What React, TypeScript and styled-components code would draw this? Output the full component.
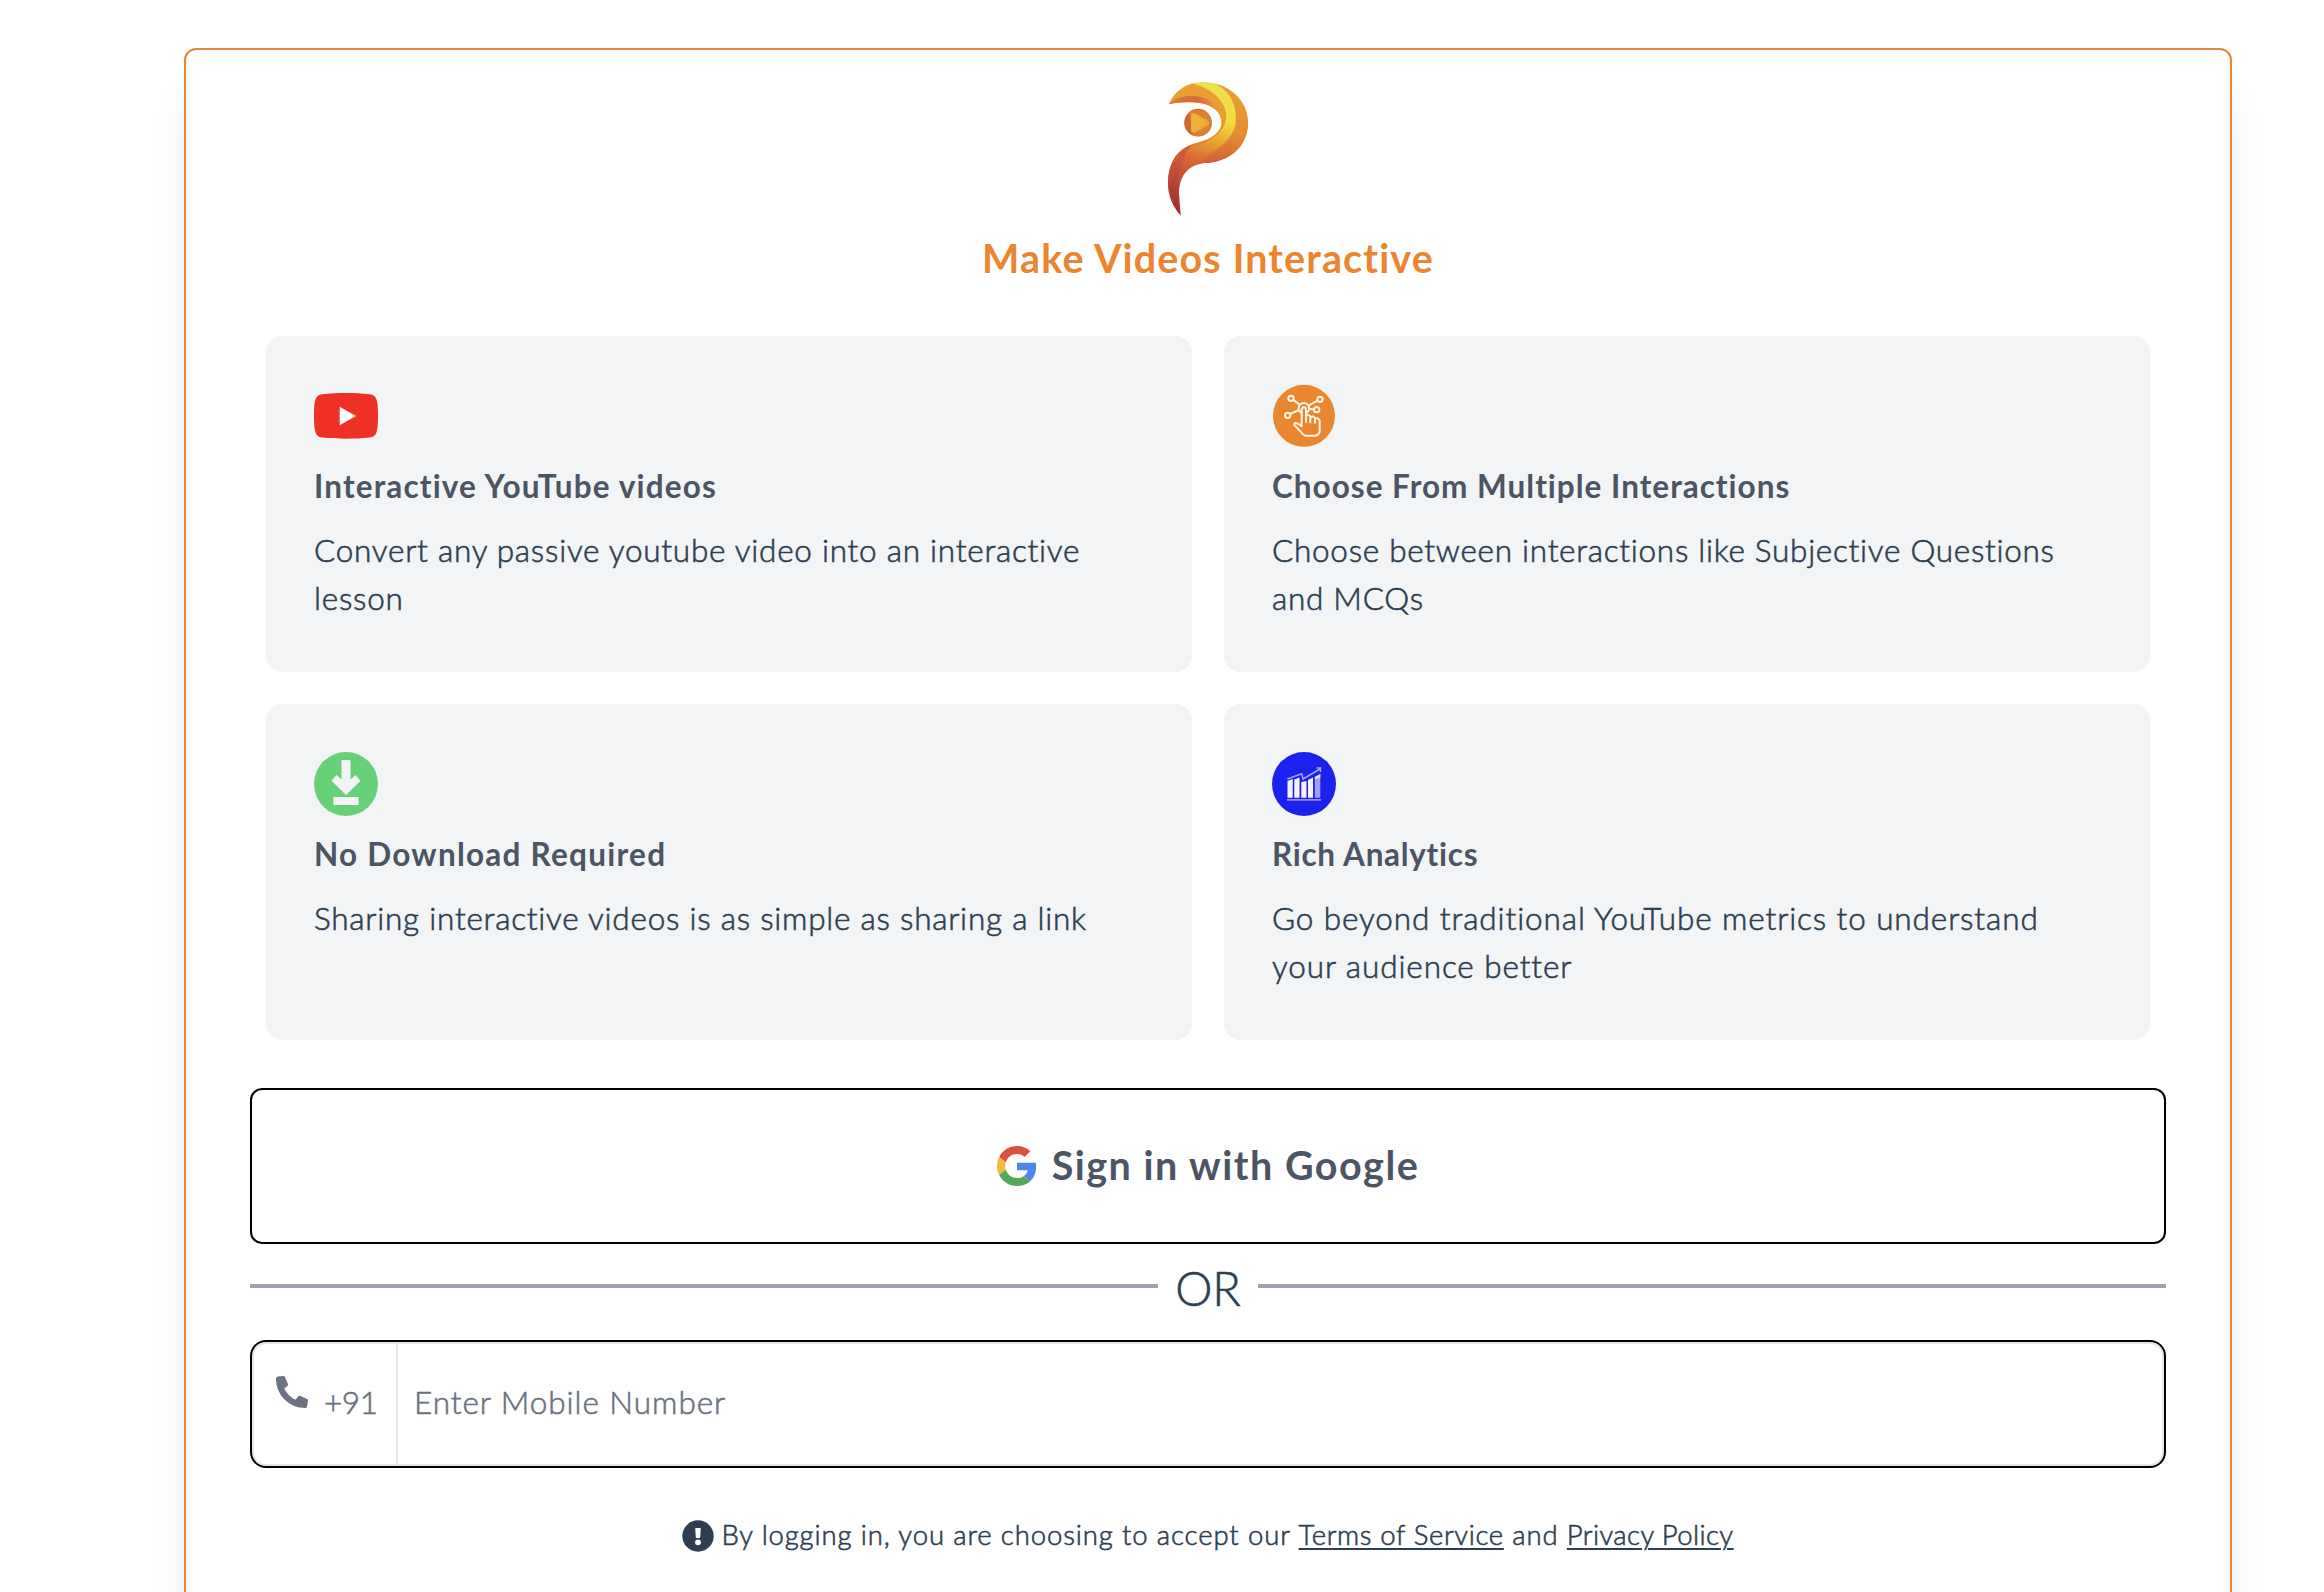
import React from "react";
import styled, { createGlobalStyle } from "styled-components";

const GlobalStyle = createGlobalStyle`
  *, *::before, *::after { box-sizing: border-box; }
  html, body { margin: 0; padding: 0; background: #fff; overflow: hidden; }
  body {
    font-family: Lato, "Liberation Sans", sans-serif;
    font-weight: 300;
    color: #2c3e50;
    font-variant-ligatures: none;
    -webkit-text-stroke: 0.6px currentColor;
  }
  h1, h2, p { margin: 0; }
  h1, h2, button { -webkit-text-stroke: 0; }
`;

const Page = styled.main`
  display: flex;
  height: 1592px;
  padding: 48px 92px 0 184px;
  overflow: hidden;
`;

const Panel = styled.section`
  display: flex;
  flex-direction: column;
  flex: 1;
  height: 1660px;
  padding: 32px 64px 0;
  border: 2px solid #ea8530;
  border-radius: 12px;
  background: #fff;
  box-shadow: 0 40px 50px -10px rgba(0, 0, 0, 0.1), 0 20px 20px -10px rgba(0, 0, 0, 0.04);
`;

const Brand = styled.header`
  display: flex;
  flex-direction: column;
  align-items: center;
  height: 254px;
`;

const BrandMark = styled.svg`
  width: 80px;
  height: 134px;
`;

const Heading = styled.h1`
  margin-top: 14px;
  color: #ea8530;
  font-size: 39.5px;
  font-weight: 700;
  line-height: 56px;
  letter-spacing: 1.15px;
`;

const FeatureGrid = styled.div`
  display: grid;
  grid-template-columns: repeat(2, 926px);
  grid-auto-rows: 336px;
  gap: 32px;
  padding: 0 16px;
`;

const FeatureCard = styled.article`
  padding: 48px 48px 0;
  border-radius: 16px;
  background: #f3f4f6;
`;

const FeatureIcon = styled.svg`
  display: block;
  width: 64px;
  height: 64px;
`;

const FeatureTitle = styled.h2<{ $tracking: number }>`
  margin-top: 14px;
  color: #4b5563;
  font-size: 31.5px;
  font-weight: 700;
  line-height: 48px;
  letter-spacing: ${(p) => p.$tracking}px;
`;

const FeatureText = styled.p<{ $tracking: number }>`
  margin-top: 16px;
  font-size: 31.5px;
  line-height: 48px;
  letter-spacing: ${(p) => p.$tracking}px;
`;

const GoogleButton = styled.button`
  display: flex;
  align-items: center;
  justify-content: center;
  gap: 15px;
  height: 156px;
  margin-top: 48px;
  padding: 0;
  border: 2px solid #000;
  border-radius: 12px;
  background: #fff;
  color: #4b5563;
  font: 700 39.5px/56px Lato, "Liberation Sans", sans-serif;
  letter-spacing: 1.5px;
`;

const GoogleMark = styled.svg`
  width: 40px;
  height: 40px;
`;

const GoogleLabel = styled.span`
  padding-bottom: 3px;
`;

const Divider = styled.div`
  display: flex;
  align-items: flex-start;
  height: 96px;
  padding-top: 8px;
`;

const Rule = styled.span`
  flex: 1;
  height: 4px;
  margin-top: 32px;
  background: #9ca3af;
`;

const DividerLabel = styled.span`
  width: 100px;
  font-size: 47px;
  line-height: 72px;
  text-align: center;
`;

const PhoneField = styled.div`
  display: flex;
  height: 128px;
  border: 2px solid #000;
  border-radius: 16px;
  background: #fff;
  box-shadow: inset 0 0 0 2px #e5e7eb;
  color: #6b7280;
  font-size: 31.5px;
  line-height: 48px;
`;

const DialCode = styled.div`
  display: flex;
  gap: 16px;
  width: 144px;
  margin-left: 2px;
  padding: 34px 0 0 22px;
  border-right: 2px solid #e5e7eb;
  letter-spacing: -0.4px;
`;

const CodeText = styled.span`
  padding-top: 2px;
`;

const PhoneGlyph = styled.svg`
  width: 32px;
  height: 32px;
  flex: none;
`;

const Placeholder = styled.span`
  padding: 36px 0 0 16px;
  letter-spacing: 0.95px;
`;

const Legal = styled.footer`
  display: flex;
  align-items: center;
  justify-content: center;
  gap: 7px;
  margin-top: 46px;
  font-size: 27.5px;
  line-height: 42px;
  letter-spacing: 0.88px;
`;

const AlertGlyph = styled.svg`
  width: 32px;
  height: 32px;
  margin-top: 2px;
`;

const LegalLink = styled.a<{ $tracking: number }>`
  color: inherit;
  letter-spacing: ${(p) => p.$tracking}px;
  text-decoration: underline;
  text-decoration-thickness: 1.5px;
  text-underline-offset: 3px;
`;

function PlayBrand() {
  return (
    <BrandMark viewBox="84 64 240 402" role="img" aria-label="Logo">
      <defs>
        <linearGradient id="body" gradientUnits="userSpaceOnUse" x1="210" y1="66" x2="110" y2="465">
          <stop offset="0" stopColor="#e9a233" />
          <stop offset=".3" stopColor="#ea9a2e" />
          <stop offset=".5" stopColor="#e27a35" />
          <stop offset=".66" stopColor="#cd5638" />
          <stop offset=".85" stopColor="#b53c35" />
          <stop offset="1" stopColor="#9c2b30" />
        </linearGradient>
        <linearGradient id="outer" gradientUnits="userSpaceOnUse" x1="280" y1="80" x2="225" y2="308">
          <stop offset="0" stopColor="#e8a031" />
          <stop offset=".55" stopColor="#e58e30" />
          <stop offset="1" stopColor="#d0603a" />
        </linearGradient>
        <linearGradient id="band" gradientUnits="userSpaceOnUse" x1="260" y1="80" x2="170" y2="300">
          <stop offset="0" stopColor="#efe04e" />
          <stop offset=".4" stopColor="#f2dc43" />
          <stop offset=".68" stopColor="#eba52f" />
          <stop offset="1" stopColor="#d9683a" />
        </linearGradient>
        <linearGradient id="fold" gradientUnits="userSpaceOnUse" x1="90" y1="110" x2="250" y2="150">
          <stop offset="0" stopColor="#dd7935" />
          <stop offset=".5" stopColor="#d8693a" />
          <stop offset="1" stopColor="#e6ad3b" />
        </linearGradient>
        <linearGradient id="tail" gradientUnits="userSpaceOnUse" x1="150" y1="260" x2="100" y2="450">
          <stop offset="0" stopColor="#d15c3a" />
          <stop offset="1" stopColor="#972a30" />
        </linearGradient>
        <clipPath id="shape">
          <path d="M86 131C104 92 137 65 188 65C264 65 324 118 324 187C324 256 270 304 195 307C146 310 112 348 118 410C119 430 121 447 122 465C97 436 84 405 84 367C84 313 106 277 137 260C167 244 196 244 222 224C236 212 244 202 244 183C244 150 207 126 158 125C130 124 105 126 86 131Z" />
        </clipPath>
      </defs>
      <g clipPath="url(#shape)">
        <rect x="84" y="64" width="240" height="402" fill="url(#body)" />
        <path d="M210 60C265 78 292 124 287 185C280 247 210 287 148 325L250 320L335 240L330 60Z" fill="url(#outer)" />
        <path d="M150 66C178 64 198 65 221 68C268 88 293 133 287 188C279 239 230 268 147 307L150 262C218 242 257 211 259 168C260 120 211 80 150 66Z" fill="url(#band)" />
        <path d="M86 131C113 105 153 101 190 111C225 122 244 149 244 183L234 158C209 128 155 119 86 131Z" fill="url(#fold)" />
        <path d="M165 248C128 272 116 323 84 395L84 250Z" fill="#d2573b" opacity=".65" />
        <path d="M150 255C112 281 88 313 82 370L122 468C96 400 112 330 150 255Z" fill="url(#tail)" opacity=".6" />
      </g>
      <circle cx="174" cy="186" r="41.500" fill="#d3673a" />
      <path d="M147 155C174 138 211 151 215 183C218 213 190 232 161 225Z" fill="#dd7e37" />
      <path d="M153 163Q153 153 163 156L201 177Q213 184 204 195L164 216Q153 219 153 208Z" fill="#eaa638" />
      <path d="M154 165Q155 156 164 160L191 177Q199 183 191 193L162 212Q154 213 154 204Z" fill="#ecb33a" />
    </BrandMark>
  );
}

function YouTubeIcon() {
  return (
    <FeatureIcon viewBox="192 192 192 192">
      <path
        d="M192 288C192 266 193 250 196 240C199 229 205 224 217 222.500C240 220 264 219 288 219C312 219 336 220 359 222.500C371 224 377 229 380 240C383 250 384 266 384 288C384 309 383 325 380 335C377 346 371 351 359 352.500C336 355 312 356 288 356C264 356 240 355 217 352.500C205 351 199 346 196 335C193 325 192 309 192 288Z"
        fill="#ee3124"
      />
      <path d="M269 260L318 288L269 316Z" fill="#fff" />
    </FeatureIcon>
  );
}

function InteractionIcon() {
  return (
    <FeatureIcon viewBox="36 42 192 192">
      <circle cx="132" cy="137.500" r="93" fill="#ea8530" />
      <g fill="none" stroke="#fff3e2" strokeWidth="6" strokeLinecap="round" strokeLinejoin="round">
        <circle cx="93" cy="85" r="8" />
        <circle cx="180" cy="88" r="8" />
        <circle cx="170" cy="119" r="8" />
        <circle cx="83" cy="136" r="8" />
        <path d="M100 90L119 104M173 92L145 107M162 118L147 117M90 132L117 120" />
        <path d="M121 127A16 16 0 1 1 142 127" />
        <path d="M125 166V120Q125 112 131.500 112Q138 112 138 120V156M138 137Q145 132 151 140V157M151 142Q159 136 165 144V158M165 148Q174 141 179 151V181Q179 195 166 197H136Q128 194 123 186L104 166Q101 158 109 159Q114 160 125 169" />
      </g>
    </FeatureIcon>
  );
}

function DownloadIcon() {
  return (
    <FeatureIcon viewBox="0 0 64 64">
      <circle cx="32" cy="32" r="32" fill="#66d176" />
      <path d="M27.500 8H36.500V27.500L41.500 23L46.500 28.700L32 43L17.500 28.700L22.500 23L27.500 27.500Z" fill="#f3f4f6" />
      <path d="M19.400 45H44.600V53H19.400Z" fill="#f3f4f6" />
    </FeatureIcon>
  );
}

function AnalyticsIcon() {
  return (
    <FeatureIcon viewBox="0 0 64 64">
      <circle cx="32" cy="32" r="32" fill="#1c22ee" />
      <path
        d="M15.500 29L20.700 27V45.700H15.500ZM22.300 27.500L27.500 25.500V45.700H22.300ZM29.300 30L34.500 29V45.700H29.300ZM36 28L41 25.500V45.700H36Z"
        fill="#f4f3ff"
      />
      <path d="M42.800 25L48.300 22V45.700H42.800Z" fill="#a29df8" />
      <path d="M42.800 25L48.300 22V26L42.800 27Z" fill="#e5e2ff" />
      <path d="M15 47.800H49" stroke="#938df6" strokeWidth="1.800" />
      <path d="M15.500 27L29.700 21.800L31 27L48 17M44.500 16H48.500V20" fill="none" stroke="#a6a1fa" strokeWidth="1.500" />
    </FeatureIcon>
  );
}

const features = [
  {
    icon: <YouTubeIcon />,
    title: "Interactive YouTube videos",
    titleTracking: 1.15,
    text: "Convert any passive youtube video into an interactive lesson",
    textTracking: 0.75,
  },
  {
    icon: <InteractionIcon />,
    title: "Choose From Multiple Interactions",
    titleTracking: 1,
    text: "Choose between interactions like Subjective Questions and MCQs",
    textTracking: 0.72,
  },
  {
    icon: <DownloadIcon />,
    title: "No Download Required",
    titleTracking: 1.25,
    text: "Sharing interactive videos is as simple as sharing a link",
    textTracking: 0.76,
  },
  {
    icon: <AnalyticsIcon />,
    title: "Rich Analytics",
    titleTracking: 0.7,
    text: "Go beyond traditional YouTube metrics to understand your audience better",
    textTracking: 0.9,
  },
];

export default function App() {
  return (
    <>
      <GlobalStyle />
      <Page>
        <Panel>
          <Brand>
            <PlayBrand />
            <Heading>Make Videos Interactive</Heading>
          </Brand>
          <FeatureGrid>
            {features.map((f) => (
              <FeatureCard key={f.title}>
                {f.icon}
                <FeatureTitle $tracking={f.titleTracking}>{f.title}</FeatureTitle>
                <FeatureText $tracking={f.textTracking}>{f.text}</FeatureText>
              </FeatureCard>
            ))}
          </FeatureGrid>
          <GoogleButton type="button">
            <GoogleMark viewBox="0 0 48 48">
              <path fill="#d9513f" d="M24 9.500c3.540 0 6.710 1.220 9.210 3.600l6.850-6.850C35.900 2.380 30.470 0 24 0 14.620 0 6.510 5.380 2.560 13.220l7.980 6.190C12.430 13.720 17.740 9.500 24 9.500z" />
              <path fill="#4f86ee" d="M46.980 24.550c0-1.570-.15-3.090-.38-4.550H24v9.020h12.940c-.58 2.960-2.260 5.480-4.780 7.180l7.730 6c4.510-4.180 7.090-10.360 7.090-17.650z" />
              <path fill="#f2bb3e" d="M10.530 28.590c-.48-1.450-.76-2.990-.76-4.590s.27-3.140.76-4.590l-7.980-6.190C.92 16.460 0 20.120 0 24c0 3.880.92 7.540 2.560 10.780l7.970-6.190z" />
              <path fill="#56a75b" d="M24 48c6.480 0 11.930-2.130 15.890-5.810l-7.730-6c-2.150 1.450-4.920 2.300-8.160 2.300-6.260 0-11.570-4.220-13.470-9.910l-7.980 6.190C6.510 42.620 14.620 48 24 48z" />
            </GoogleMark>
            <GoogleLabel>Sign in with Google</GoogleLabel>
          </GoogleButton>
          <Divider>
            <Rule />
            <DividerLabel>OR</DividerLabel>
            <Rule />
          </Divider>
          <PhoneField>
            <DialCode>
              <PhoneGlyph viewBox="0 0 20 20">
                <path
                  fill="#6b7280"
                  d="M1.200 .35L4.700 0Q5.300 0 5.600 .7L7.500 5.100Q7.700 5.800 7.100 6.300L5.100 7.800Q7.500 12.600 12.200 14.900L13.800 12.800Q14.300 12.200 15 12.400L19.400 14.300Q20 14.600 20 15.200L19.400 19Q19.200 20 18.300 20Q10.500 19.900 5.300 14.700Q.1 9.500 0 1.700Q0 .6 1.200 .35Z"
                />
              </PhoneGlyph>
              <CodeText>+91</CodeText>
            </DialCode>
            <Placeholder>Enter Mobile Number</Placeholder>
          </PhoneField>
          <Legal>
            <AlertGlyph viewBox="0 0 32 32">
              <circle cx="16" cy="16" r="15.700" fill="#2c3e50" />
              <path d="M13.200 8.700Q13.200 8 14 8H18Q18.800 8 18.700 8.700L18.200 17.300Q18.100 18 17.400 18H14.600Q13.900 18 13.800 17.300Z" fill="#fff" />
              <circle cx="16" cy="22.300" r="2.900" fill="#fff" />
            </AlertGlyph>
            <p>
              By logging in, you are choosing to accept our{" "}
              <LegalLink $tracking={0.65}>Terms of Service</LegalLink> and{" "}
              <LegalLink $tracking={0.4}>Privacy Policy</LegalLink>
            </p>
          </Legal>
        </Panel>
      </Page>
    </>
  );
}
